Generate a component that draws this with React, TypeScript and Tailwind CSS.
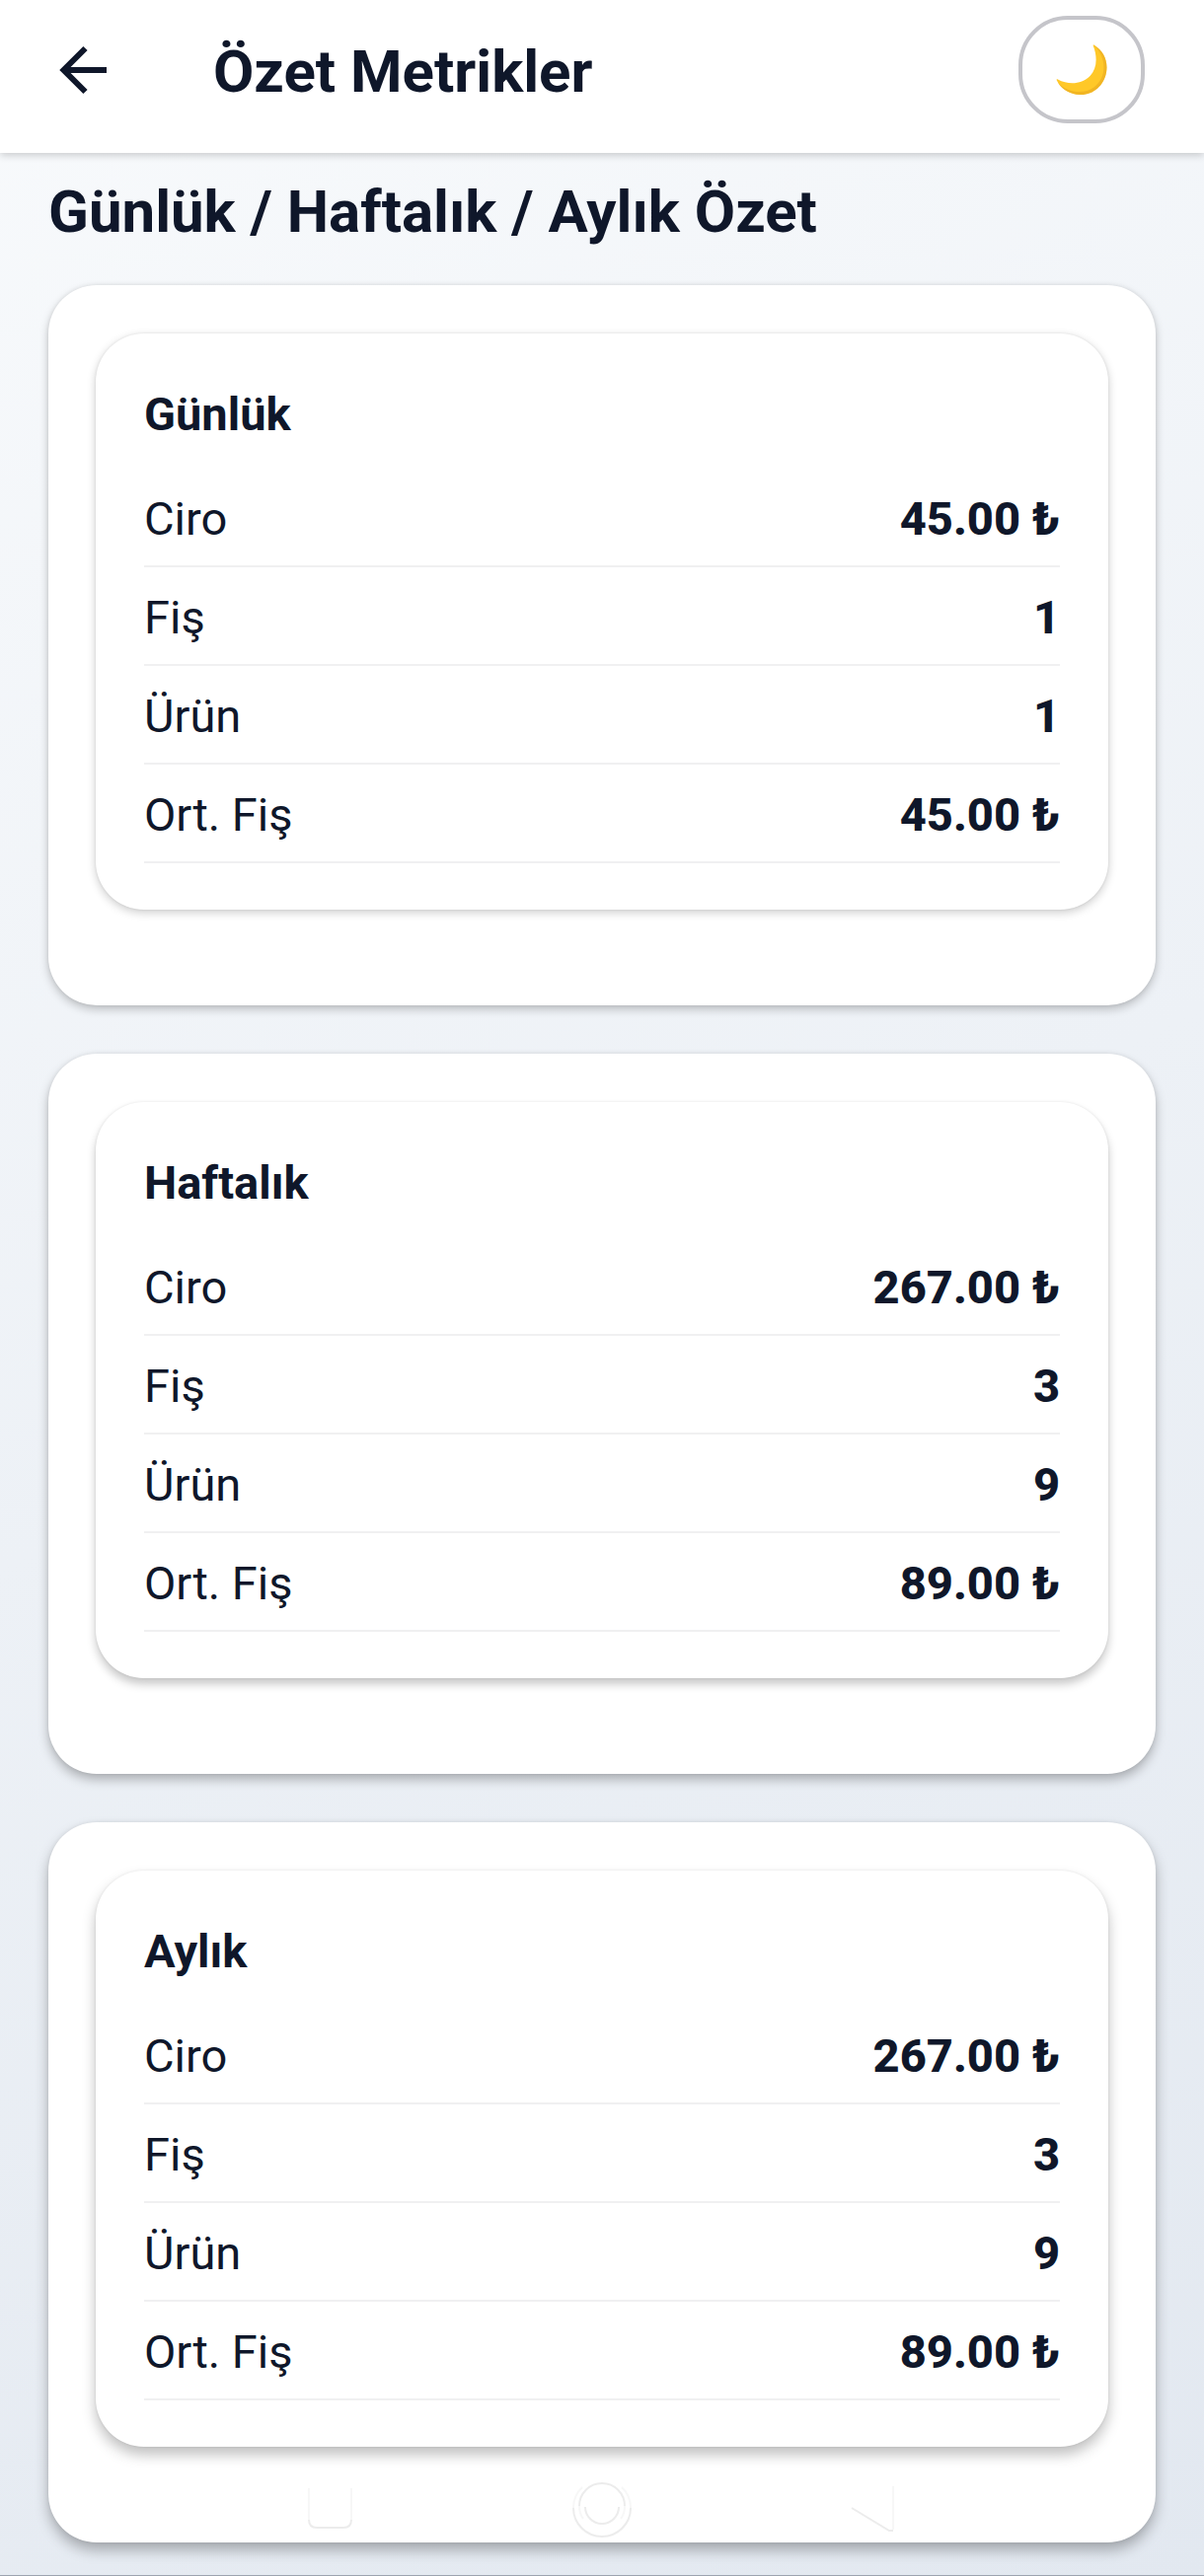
import React from 'react';

interface Metric {
  label: string;
  value: string;
}

interface Summary {
  title: string;
  shadow: string;
  innerShadow: string;
  metrics: Metric[];
}

const buildMetrics = (revenue: string, receipts: number, products: number, average: string): Metric[] => [
  { label: 'Ciro', value: `${revenue} ₺` },
  { label: 'Fiş', value: String(receipts) },
  { label: 'Ürün', value: String(products) },
  { label: 'Ort. Fiş', value: `${average} ₺` }
];

// Cards lower on the screen cast a deeper shadow
const summaries: Summary[] = [
  {
    title: 'Günlük',
    shadow: 'shadow-[0_4px_10px_rgba(0,0,0,0.22),0_0_4px_rgba(0,0,0,0.08)]',
    innerShadow: 'shadow-[0_3px_10px_rgba(0,0,0,0.20),0_0_3px_rgba(0,0,0,0.08)]',
    metrics: buildMetrics('45.00', 1, 1, '45.00')
  },
  {
    title: 'Haftalık',
    shadow: 'shadow-[0_6px_11px_rgba(0,0,0,0.26),0_0_4px_rgba(0,0,0,0.08)]',
    innerShadow: 'shadow-[0_6px_10px_rgba(0,0,0,0.22),0_0_3px_rgba(0,0,0,0.08)]',
    metrics: buildMetrics('267.00', 3, 9, '89.00')
  },
  {
    title: 'Aylık',
    shadow: 'shadow-[0_8px_14px_rgba(0,0,0,0.28),0_0_4px_rgba(0,0,0,0.08)]',
    innerShadow: 'shadow-[0_8px_14px_rgba(0,0,0,0.25),0_0_3px_rgba(0,0,0,0.08)]',
    metrics: buildMetrics('267.00', 3, 9, '89.00')
  }
];

const BackIcon = () => (
  <svg viewBox="0 0 72 72" className="w-[72px] h-[72px]" fill="none" stroke="currentColor" strokeWidth="6" aria-hidden="true">
    <path d="M60 36H17" />
    <path d="M38.500 14L16.500 36L38.500 58" />
  </svg>
);

const MoonIcon = () => (
  <svg viewBox="0 0 52 52" className="w-[52px] h-[52px]" aria-hidden="true">
    <path
      d="M38.5 0.6C48.5 7 53 17 51 28.5C48.5 42 37.5 51.5 24.5 51C13.5 50.5 5 45 0.7 36.2C0.3 35.2 1 34.9 1.9 35.5C13 41.5 26 40.5 34.5 32C41.5 24.5 42.3 13 37.8 1.6C37.4 0.6 37.8 0.2 38.5 0.6Z"
      fill="#FFC828"
    />
    <path
      d="M38.5 0.6C48.5 7 53 17 51 28.5C48.5 42 37.5 51.5 24.5 51C14.5 50.5 6.5 46 2 39C12 49 28 51 38.5 43.5C51.500 33.5 52 14.5 38.5 0.6Z"
      fill="#E8A820"
      opacity="0.6"
    />
  </svg>
);

const Header = () => (
  <header className="relative flex items-center justify-between bg-white pl-12 pr-[60px] pt-4 pb-[30px] shadow-[0_2px_8px_rgba(0,0,0,0.20)]">
    <div className="flex items-center gap-24">
      <button type="button" aria-label="Geri">
        <BackIcon />
      </button>
      <h1 className="text-[60px] leading-[72px] font-bold pt-1">Özet Metrikler</h1>
    </div>
    <button
      type="button"
      aria-label="Koyu tema"
      className="flex items-center justify-center w-32 h-[109px] rounded-[50px] border-4 border-[#c5c5ca]"
    >
      <MoonIcon />
    </button>
  </header>
);

const SummaryCard: React.FC<{ summary: Summary }> = ({ summary }) => (
  <section className={`bg-white rounded-[49px] px-12 pt-[49px] pb-[97px] ${summary.shadow}`}>
    <div className={`bg-white rounded-[49px] px-[49px] pt-[49px] pb-[47px] ${summary.innerShadow}`}>
      <h3 className="text-[47px] leading-[66px] font-bold mb-[22px]">{summary.title}</h3>
      <dl>
        {summary.metrics.map((metric) => (
          <div
            key={metric.label}
            className="flex items-center justify-between pt-[26px] pb-[22px] border-b-2 border-[#f0f0f1] text-[47px] leading-[50px]"
          >
            <dt>{metric.label}</dt>
            <dd className="font-extrabold">{metric.value}</dd>
          </div>
        ))}
      </dl>
    </div>
  </section>
);

// Faint system navigation buttons floating over the page
const SystemNav = () => (
  <div className="absolute inset-x-0 bottom-9 flex justify-center" aria-hidden="true">
    <svg viewBox="0 0 600 64" className="w-[600px] h-16" fill="none" stroke="#ececec" strokeWidth="2">
      <path d="M3 12V44M46 12V44" stroke="#f7f7f7" />
      <path d="M3 44Q3 52 11 52H38Q46 52 46 44" />
      <path d="M271 32A29 29 0 0 1 280 11M329 32A29 29 0 0 0 320 11" stroke="#f7f7f7" />
      <path d="M271 32A29 29 0 0 0 329 32" />
      <path d="M277 30A23 23 0 0 1 323 30" />
      <path d="M277 30Q277 38 281 43M323 30Q323 38 319 43" stroke="#f7f7f7" />
      <path d="M283 31A17 17 0 0 0 317 31" />
      <path d="M595 10V54" stroke="#f7f7f7" />
      <path d="M553 32L591 55H595" />
    </svg>
  </div>
);

export default function App() {
  return (
    <div className="relative min-h-screen bg-[linear-gradient(155deg,#f8fafc,#e2e8f0)] border-b border-[#9ca3af] font-[Roboto,sans-serif] text-[#0f172a]">
      <Header />
      <main className="px-[49px] pt-6 pb-8">
        <h2 className="text-[60px] leading-[72px] font-bold mb-[38px]">Günlük / Haftalık / Aylık Özet</h2>
        <div className="flex flex-col gap-[49px]">
          {summaries.map((summary) => (
            <SummaryCard key={summary.title} summary={summary} />
          ))}
        </div>
      </main>
      <SystemNav />
    </div>
  );
}
